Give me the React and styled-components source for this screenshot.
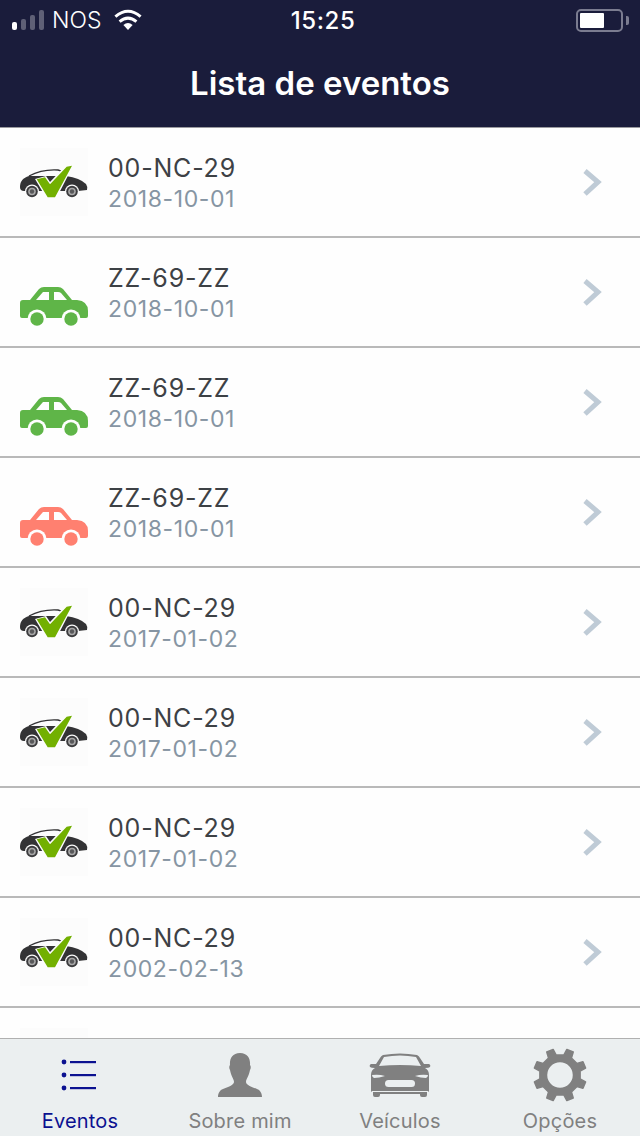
import React from 'react';
import styled, { createGlobalStyle } from 'styled-components';

const GlobalStyle = createGlobalStyle`
  html, body {
    margin: 0;
    padding: 0;
    background: #fefefe;
  }
  * {
    box-sizing: border-box;
  }
`;

const events = [
  { plate: '00-NC-29', date: '2018-10-01', icon: 'check' },
  { plate: 'ZZ-69-ZZ', date: '2018-10-01', icon: 'green' },
  { plate: 'ZZ-69-ZZ', date: '2018-10-01', icon: 'green' },
  { plate: 'ZZ-69-ZZ', date: '2018-10-01', icon: 'red' },
  { plate: '00-NC-29', date: '2017-01-02', icon: 'check' },
  { plate: '00-NC-29', date: '2017-01-02', icon: 'check' },
  { plate: '00-NC-29', date: '2017-01-02', icon: 'check' },
  { plate: '00-NC-29', date: '2002-02-13', icon: 'check' },
  { plate: '00-NC-29', date: '2002-02-13', icon: 'check' },
];

const SideCar = ({ color }) => (
  <svg width="68" height="68" viewBox="0 -1 68 68">
    <path
      fill={color}
      d="M0 44 Q0 41 3 41 L10 41 L19 30 Q21 28 24 28 L38 28 Q41 28 43 30 L52 41 L57 41 Q68 42 68 52 L68 57 Q68 59 66 59 L2 59 Q0 59 0 57 Z"
    />
    <path fill="#fefefe" d="M16 41 L23 33 L29 33 L29 41 Z M34 33 L38 33 Q40 33 41 34 L47 41 L34 41 Z" />
    <circle cx="17" cy="60" r="9.5" fill="#fefefe" />
    <circle cx="51" cy="60" r="9.5" fill="#fefefe" />
    <circle cx="17" cy="60" r="6.7" fill={color} />
    <circle cx="51" cy="60" r="6.7" fill={color} />
  </svg>
);

const CheckCar = () => (
  <svg width="68" height="68" viewBox="0 -1 68 68">
    <path
      fill="#333335"
      d="M0 38 C0 32 3 29 9 27 L46 27 Q60 29 66 35 Q68 38 67 41 L58 42 L46 42 L20 42 L4 42 Q0 42 0 38 Z"
    />
    <path fill="none" stroke="#333335" strokeWidth="1.4" d="M9 27 Q22 20 38 21 Q44 22 46 29" />
    <path fill="#fcfcfc" d="M14 27 Q24 22 30 22.5 L31 27 Z M33 22.5 Q40 22 42 24 L44 27 L33 27 Z" />
    <circle cx="12" cy="42.5" r="7" fill="#fcfcfc" />
    <circle cx="52" cy="42.5" r="7" fill="#fcfcfc" />
    <circle cx="12" cy="42.5" r="5.8" fill="#3c3c3e" />
    <circle cx="52" cy="42.5" r="5.8" fill="#3c3c3e" />
    <circle cx="12" cy="42.5" r="3.8" fill="#a8a8a8" />
    <circle cx="52" cy="42.5" r="3.8" fill="#a8a8a8" />
    <circle cx="12" cy="42.5" r="2.2" fill="#58585a" />
    <circle cx="52" cy="42.5" r="2.2" fill="#58585a" />
    <path fill="#fcfcfc" d="M15 30 L26 27 L30 33 L46 16 L54 15 L36 50 L27 50 Z" />
    <path fill="#72b000" d="M16.7 30.3 L25 28.3 L30 35.3 L46.7 17.7 L52 16.7 L35 48.3 L27.7 48.3 Z" />
  </svg>
);

const Chevron = () => (
  <svg width="20" height="30" viewBox="0 0 20 30">
    <path d="M3 4 L16 15 L3 27" fill="none" stroke="#bfcbd6" strokeWidth="5" />
  </svg>
);

const SignalBars = () => (
  <Signal>
    <Bar $height={8} $on />
    <Bar $height={11} />
    <Bar $height={15} />
    <Bar $height={20} />
  </Signal>
);

const WifiIcon = () => (
  <svg width="30" height="22" viewBox="0 0 30 22">
    <path d="M15 21 L10.4 16 Q15 12 19.6 16 Z" fill="#fff" />
    <path d="M6.6 12.6 Q15 5.6 23.4 12.6" fill="none" stroke="#fff" strokeWidth="3" />
    <path d="M2.4 7.6 Q15 -3 27.6 7.6" fill="none" stroke="#fff" strokeWidth="3" />
  </svg>
);

const ListIcon = ({ color }) => (
  <svg width="38" height="34" viewBox="0 0 38 34" fill={color}>
    <circle cx="3" cy="4" r="2.4" />
    <circle cx="3" cy="17" r="2.4" />
    <circle cx="3" cy="30" r="2.4" />
    <rect x="9" y="3" width="26" height="2.2" />
    <rect x="9" y="16" width="26" height="2.2" />
    <rect x="9" y="29" width="26" height="2.2" />
  </svg>
);

const UserIcon = ({ color }) => (
  <svg width="44" height="44" viewBox="0 0 44 44" fill={color}>
    <path d="M22 0 C30 0 32.500 6 32 12 C33 13 33 15 32 17 C31 23 28 26 28 29 C28 32 34 34 39 36 C42 37 44 40 44 44 L0 44 C0 40 2 37 5 36 C10 34 16 32 16 29 C16 26 13 23 12 17 C11 15 11 13 12 12 C11.500 6 14 0 22 0 Z" />
  </svg>
);

const FrontCarIcon = ({ color }) => (
  <svg width="62" height="44" viewBox="0 0 62 44">
    <path
      fill={color}
      d="M14 2 Q31 -1 48 2 Q50 3 51 5 L55 11 L60 11 Q62 12 61 14 Q60 15 56 15 Q60 17 60 22 L60 38 Q60 39 58 39 L58 42 Q58 44 56 44 L53 44 Q51 44 51 42 L51 41 L11 41 L11 42 Q11 44 9 44 L6 44 Q4 44 4 42 L4 39 Q2 39 2 38 L2 22 Q2 17 6 15 Q2 15 1 14 Q0 12 2 11 L7 11 L11 5 Q12 3 14 2 Z"
    />
    <path fill="#ebeff0" d="M15 4 Q31 1 47 4 L52 13 Q31 11 10 13 Z" />
    <path fill="#ebeff0" d="M3 22 Q10 21 16 23 Q10 25 5 25 Q3 24 3 22 Z M59 22 Q52 21 46 23 Q52 25 57 25 Q59 24 59 22 Z" />
    <rect x="16" y="27" width="30" height="7" rx="3.500" fill="#ebeff0" />
    <rect x="3" y="38" width="56" height="1" fill="#ebeff0" />
  </svg>
);

// 8 teeth, notch straight up like the reference
const gearPath = () => {
  const teeth = 8;
  const tip = 26.5;
  const root = 20.5;
  let d = '';
  for (let i = 0; i < teeth; i++) {
    const a = (i * 2 * Math.PI) / teeth;
    const pts = [
      [root, a - 0.2],
      [tip, a - 0.13],
      [tip, a + 0.13],
      [root, a + 0.2],
    ].map(([r, t]) => [
      (27 + r * Math.cos(t - Math.PI / 2 + Math.PI / 8)).toFixed(2),
      (27 + r * Math.sin(t - Math.PI / 2 + Math.PI / 8)).toFixed(2),
    ]);
    d += pts.map((p, k) => `${i === 0 && k === 0 ? 'M' : 'L'}${p[0]} ${p[1]}`).join(' ') + ' ';
  }
  return d + 'Z M27 13.500 A13.500 13.500 0 1 0 27 40.500 A13.500 13.500 0 1 0 27 13.500 Z';
};

const GearIcon = ({ color }) => (
  <svg width="54" height="54" viewBox="0 0 54 54">
    <path d={gearPath()} fill={color} stroke={color} strokeWidth="1.5" strokeLinejoin="round" fillRule="evenodd" />
  </svg>
);

const tabs = [
  { label: 'Eventos', Icon: ListIcon, active: true },
  { label: 'Sobre mim', Icon: UserIcon },
  { label: 'Veículos', Icon: FrontCarIcon },
  { label: 'Opções', Icon: GearIcon },
];

const App = () => (
  <Page>
    <GlobalStyle />
    <Header>
      <StatusBar>
        <Carrier>
          <SignalBars />
          <CarrierName>NOS</CarrierName>
          <WifiIcon />
        </Carrier>
        <Clock>15:25</Clock>
        <BatteryWrap>
          <Battery>
            <BatteryFill />
          </Battery>
          <BatteryNub />
        </BatteryWrap>
      </StatusBar>
      <Title>Lista de eventos</Title>
    </Header>
    <EventList>
      {events.map((ev, i) => (
        <EventRow key={i}>
          <Thumb $plain={ev.icon !== 'check'}>
            {ev.icon === 'check' && <CheckCar />}
            {ev.icon === 'green' && <SideCar color="#5fb548" />}
            {ev.icon === 'red' && <SideCar color="#ff8070" />}
          </Thumb>
          <EventText>
            <Plate>{ev.plate}</Plate>
            <EventDate>{ev.date}</EventDate>
          </EventText>
          <Chevron />
        </EventRow>
      ))}
    </EventList>
    <TabBar>
      {tabs.map(({ label, Icon, active }) => (
        <Tab key={label}>
          <TabIcon>
            <Icon color={active ? '#0b1190' : '#808080'} />
          </TabIcon>
          <TabLabel $active={active}>{label}</TabLabel>
        </Tab>
      ))}
    </TabBar>
  </Page>
);

const Page = styled.div`
  display: flex;
  flex-direction: column;
  width: 640px;
  height: 1136px;
  overflow: hidden;
  font-family: Inter, "Liberation Sans", sans-serif;
`;

const Header = styled.header`
  flex: none;
  height: 128px;
  background: #1a1c3b;
  border-bottom: 1px solid #9a9a9f;
  color: #fff;
`;

const StatusBar = styled.div`
  display: grid;
  grid-template-columns: 1fr auto 1fr;
  align-items: center;
  height: 40px;
  padding: 0 11px 0 12px;
`;

const Carrier = styled.div`
  display: flex;
  align-items: center;
  gap: 9px;
`;

const Signal = styled.div`
  display: flex;
  align-items: flex-end;
  gap: 4px;
  height: 20px;
`;

const Bar = styled.span`
  width: 5px;
  height: ${(p) => p.$height}px;
  border-radius: 2px;
  background: ${(p) => (p.$on ? '#fff' : 'rgba(255, 255, 255, 0.3)')};
`;

const CarrierName = styled.span`
  font-size: 23px;
  font-weight: 300;
  margin-left: -1px;
  margin-right: 3px;
`;

const Clock = styled.span`
  font-size: 24px;
  font-weight: 500;
  letter-spacing: 0.6px;
  margin-left: 5px;
`;

const BatteryWrap = styled.div`
  display: flex;
  align-items: center;
  justify-content: flex-end;
  gap: 3px;
`;

const Battery = styled.div`
  width: 47px;
  height: 23px;
  padding: 2px;
  border: 2px solid #7b7c90;
  border-radius: 5px;
`;

const BatteryFill = styled.div`
  width: 24px;
  height: 100%;
  background: #fff;
  border-radius: 1px;
`;

const BatteryNub = styled.span`
  width: 3px;
  height: 9px;
  background: #7b7c90;
  border-radius: 0 2px 2px 0;
`;

const Title = styled.h1`
  margin: 0;
  text-align: center;
  font-size: 33px;
  line-height: 86px;
  height: 87px;
  font-weight: 600;
`;

const EventList = styled.main`
  flex: 1;
  min-height: 0;
  overflow: hidden;
  background: #fefefe;
`;

const EventRow = styled.div`
  display: flex;
  align-items: center;
  height: 110px;
  padding: 0 38px 0 20px;
  border-bottom: 2px solid #b9b9b9;
`;

const Thumb = styled.div`
  flex: none;
  width: 68px;
  height: 68px;
  background: ${(p) => (p.$plain ? 'transparent' : '#fcfcfc')};
  svg {
    display: block;
  }
`;

const EventText = styled.div`
  flex: 1;
  margin-left: 20px;
  padding-top: 1px;
`;

const Plate = styled.div`
  font-size: 25px;
  line-height: 32px;
  color: #3d4145;
  letter-spacing: 0.8px;
`;

const EventDate = styled.div`
  font-size: 23px;
  line-height: 30px;
  color: #8695a3;
  letter-spacing: 0.6px;
`;

const TabBar = styled.nav`
  flex: none;
  display: grid;
  grid-template-columns: repeat(4, 1fr);
  height: 98px;
  padding-top: 14px;
  background: #ebeff0;
  border-top: 1px solid #b0b0b0;
`;

const Tab = styled.div`
  display: flex;
  flex-direction: column;
  align-items: center;
`;

const TabIcon = styled.div`
  display: flex;
  align-items: center;
  justify-content: center;
  height: 44px;
  svg {
    flex: none;
    display: block;
  }
`;

const TabLabel = styled.span`
  margin-top: 12px;
  font-size: 20px;
  line-height: 24px;
  letter-spacing: 0.2px;
  color: ${(p) => (p.$active ? '#0b1190' : '#808080')};
`;

export default App;
